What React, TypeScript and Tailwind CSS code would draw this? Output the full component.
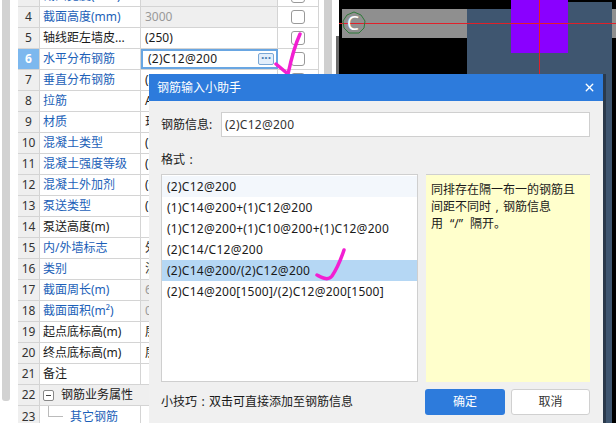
import { X } from "lucide-react";

const rows = [
  { n: 3, name: "截面宽度(mm)", value: "300", link: true, ro: true },
  { n: 4, name: "截面高度(mm)", value: "3000", link: true, ro: true },
  { n: 5, name: "轴线距左墙皮...", value: "(250)" },
  { n: 6, name: "水平分布钢筋", value: "(2)C12@200", link: true, active: true },
  { n: 7, name: "垂直分布钢筋", value: "(2)C12@200", link: true },
  { n: 8, name: "拉筋", value: "A6@600", link: true },
  { n: 9, name: "材质", value: "现浇混凝土", link: true },
  { n: 10, name: "混凝土类型", value: "(泵送砼)", link: true },
  { n: 11, name: "混凝土强度等级", value: "(C30)", link: true },
  { n: 12, name: "混凝土外加剂", value: "(无)", link: true },
  { n: 13, name: "泵送类型", value: "(混凝土泵)", link: true },
  { n: 14, name: "泵送高度(m)", value: "" },
  { n: 15, name: "内/外墙标志", value: "外墙", link: true },
  { n: 16, name: "类别", value: "混凝土墙", link: true },
  { n: 17, name: "截面周长(m)", value: "6.6", link: true, ro: true },
  { n: 18, name: "截面面积(m²)", value: "0.6", link: true, ro: true },
  { n: 19, name: "起点底标高(m)", value: "层底标高" },
  { n: 20, name: "终点底标高(m)", value: "层顶标高" },
  { n: 21, name: "备注", value: "" },
];

const formats = [
  "(2)C12@200",
  "(1)C14@200+(1)C12@200",
  "(1)C12@200+(1)C10@200+(1)C12@200",
  "(2)C14/C12@200",
  "(2)C14@200/(2)C12@200",
  "(2)C14@200[1500]/(2)C12@200[1500]",
];

function Colon({ char }: { char: string }) {
  return <span className="inline-block w-[12px] text-center">{char}</span>;
}

function Row({ r }: { r: (typeof rows)[number] }) {
  return (
    <div className="flex h-[21px] border-b border-[#d4d4d4]">
      <div
        className={
          r.active
            ? "w-[22px] shrink-0 flex items-center justify-center border-r border-[#d4d4d4] bg-[#7db8ee] text-white font-bold"
            : "w-[22px] shrink-0 flex items-center justify-center border-r border-[#d4d4d4] bg-[#efefef] text-[#333]"
        }
      >
        {r.n}
      </div>
      <div
        className={
          r.link
            ? "w-[101px] shrink-0 pl-[3px] flex items-center border-r border-[#d4d4d4] text-[#1c5fb8] whitespace-nowrap overflow-hidden"
            : "w-[101px] shrink-0 pl-[3px] flex items-center border-r border-[#d4d4d4] text-[#1a1a1a] whitespace-nowrap overflow-hidden"
        }
      >
        {r.name}
      </div>
      {r.active ? (
        <div className="w-[137px] shrink-0 pl-[5px] pr-[2px] flex items-center justify-between border-2 border-[#69a6e2] text-[#1a1a1a]">
          <span className="tracking-[0.25px]">{r.value}</span>
          <span className="w-[16px] h-[12px] rounded-[2px] border border-[#7aa7d6] bg-[#e2eefb] flex items-center justify-center text-[12px] font-bold leading-none text-[#4a7db3] pb-[3px]">
            ···
          </span>
        </div>
      ) : (
        <div
          className={
            r.ro
              ? "w-[137px] shrink-0 pl-[4px] flex items-center border-r border-[#d4d4d4] bg-[#efefef] text-[#999]"
              : "w-[137px] shrink-0 pl-[4px] flex items-center border-r border-[#d4d4d4] text-[#1a1a1a]"
          }
        >
          {r.value}
        </div>
      )}
      <div className="w-[41px] shrink-0 flex items-center justify-center border-r border-[#d4d4d4]">
        <span className="w-[14px] h-[14px] rounded-[3px] border border-[#999] bg-white" />
      </div>
    </div>
  );
}

export default function App() {
  return (
    <div
      className="relative flex w-[616px] h-[423px] overflow-hidden bg-white text-[12px] leading-none"
      style={{ fontFamily: '"Noto Sans", "Noto Sans CJK SC", sans-serif' }}
    >
      {/* left property panel */}
      <div className="w-[339px] shrink-0 flex h-full">
        <div className="w-[18px] shrink-0 pl-[2px]">
          <div className="w-[8px] h-[401px] bg-[#d2d2d2] rounded-b-[3px]" />
        </div>
        <div className="w-[301px] shrink-0 -mt-[14px]">
          {rows.map((r) => (
            <Row key={r.n} r={r} />
          ))}
          <div className="flex h-[21px] border-b border-[#d4d4d4]">
            <div className="w-[22px] shrink-0 flex items-center justify-center border-r border-[#d4d4d4] bg-[#efefef] text-[#333]">
              22
            </div>
            <div className="flex-1 flex items-center gap-[7px] pl-[3px] bg-[#efefef] text-[#1a1a1a]">
              <span className="w-[11px] h-[11px] border border-[#888] rounded-[2px] bg-white flex items-center justify-center">
                <span className="w-[5px] h-px bg-[#444]" />
              </span>
              钢筋业务属性
            </div>
          </div>
          <div className="flex h-[21px]">
            <div className="w-[22px] shrink-0 flex items-center justify-center border-r border-[#d4d4d4] bg-[#efefef] text-[#333]">
              23
            </div>
            <div className="w-[101px] shrink-0 flex items-center border-r border-[#d4d4d4] pl-[8px] text-[#1c5fb8]">
              <span className="self-start w-[15px] h-[11px] border-l border-b border-[#bbb] mr-[7px]" />
              其它钢筋
            </div>
          </div>
        </div>
        <div className="w-[5px] shrink-0" />
        <div className="w-[8px] h-full shrink-0 bg-[#cfcfcf]" />
        <div className="w-[4px] shrink-0" />
        <div className="w-[4px] shrink-0 flex flex-col">
          <div className="h-[36px] bg-white" />
          <div className="flex-1 bg-[#6a6a6a]" />
        </div>
      </div>

      {/* drawing canvas */}
      <div className="relative flex-1 bg-black">
        <div className="absolute left-[3px] top-[9px] w-[125px] h-[29px] bg-[#8f8f8f]" />
        <div className="absolute left-[128px] top-[9px] w-[145px] h-[414px] bg-[#3f5670]" />
        <div className="absolute left-[229px] top-[2px] w-[44px] h-[10px] bg-[#3f5670]" />
        <div className="absolute left-[273px] top-[9px] w-[4px] h-[29px] bg-[#8f8f8f]" />
        <div className="absolute left-[172px] top-0 w-[57px] h-[53px] bg-[#8a00ff]" />
        <div className="absolute left-0 right-0 top-[23px] h-px bg-[#e0202a]" />
        <div className="absolute left-[200px] top-0 w-px h-[74px] bg-[#e0202a]" />
        <svg className="absolute left-[3px] top-[11px]" width="24" height="24" viewBox="0 0 24 24">
          <polygon
            points="12,1 19,4 23,10 22,17 17,22 7,22 2,17 1,10 5,4"
            fill="none"
            stroke="#2f7a3a"
            strokeWidth="1"
          />
        </svg>
        <span className="absolute left-[8px] top-[13px] text-[19px] leading-[20px] text-white">C</span>
      </div>

      {/* dialog */}
      <div className="absolute left-[149px] top-[74px] w-[454px] h-[349px] bg-[#f0f0f0] flex flex-col shadow-[3px_0_0_#2b3a4c]">
        <div className="h-[27px] shrink-0 bg-[#2d7bdc] flex items-center justify-between pl-[8px] pr-[7px] text-white">
          钢筋输入小助手
          <X size={13} strokeWidth={2.5} />
        </div>
        <div className="flex flex-col flex-1 pl-[12px] pr-[13px] pt-[11px]">
          <div className="flex items-center h-[25px]">
            <span className="w-[60px] shrink-0 text-[#1a1a1a]">钢筋信息:</span>
            <div className="flex-1 h-full bg-white border border-[#cfcfcf] flex items-center pl-[3px] text-[#333] tracking-[0.25px]">
              (2)C12@200
            </div>
          </div>
          <div className="mt-[17px] h-[12px] text-[#1a1a1a]">
            格式
            <Colon char=":" />
          </div>
          <div className="flex mt-[8px] h-[208px]">
            <div className="w-[257px] shrink-0 bg-white border border-[#cfcfcf] pt-px">
              {formats.map((f, i) => (
                <div
                  key={f}
                  className={
                    i === 4
                      ? "h-[21px] pl-[5px] flex items-center bg-[#b5d7f4] text-[#1a1a1a] tracking-[0.25px]"
                      : i === 0
                        ? "h-[21px] pl-[5px] flex items-center bg-[#f3f7fc] text-[#1a1a1a] tracking-[0.25px]"
                        : "h-[21px] pl-[5px] flex items-center text-[#1a1a1a] tracking-[0.25px]"
                  }
                >
                  {f}
                </div>
              ))}
            </div>
            <div className="ml-[8px] flex-1 bg-[#ffffcc] border-t border-[#cfcfcf] pl-[5px] pt-[6px] leading-[17px] text-[#1a1a1a]">
              <div>同排存在隔一布一的钢筋且</div>
              <div>
                间距不同时
                <Colon char="," />
                钢筋信息
              </div>
              <div>
                用<span className="mx-[7px]">“/”</span>隔开。
              </div>
            </div>
          </div>
          <div className="flex items-center justify-between mt-[7px]">
            <span className="text-[#1a1a1a]">
              小技巧
              <Colon char=":" />
              双击可直接添加至钢筋信息
            </span>
            <div className="flex gap-[6px]">
              <div className="w-[80px] h-[26px] rounded-[3px] bg-[#2d7bdc] text-white flex items-center justify-center">确定</div>
              <div className="w-[79px] h-[26px] rounded-[3px] bg-white border border-[#d0d0d0] text-[#333] flex items-center justify-center">取消</div>
            </div>
          </div>
        </div>
      </div>

      {/* hand drawn check marks */}
      <svg className="absolute left-0 top-0 pointer-events-none" width="616" height="423" viewBox="0 0 616 423">
        <clipPath id="above-dialog">
          <rect x="0" y="0" width="616" height="74" />
        </clipPath>
        <path
          d="M300 34 C295 45 291 60 288 74 L276 64"
          fill="none"
          stroke="#f21fd2"
          strokeWidth="3.5"
          strokeLinecap="round"
          clipPath="url(#above-dialog)"
        />
        <path
          d="M344 250 C340 262 336 270 332 276 C328 281 323 278 317 275"
          fill="none"
          stroke="#f21fd2"
          strokeWidth="3.5"
          strokeLinecap="round"
        />
      </svg>
    </div>
  );
}
